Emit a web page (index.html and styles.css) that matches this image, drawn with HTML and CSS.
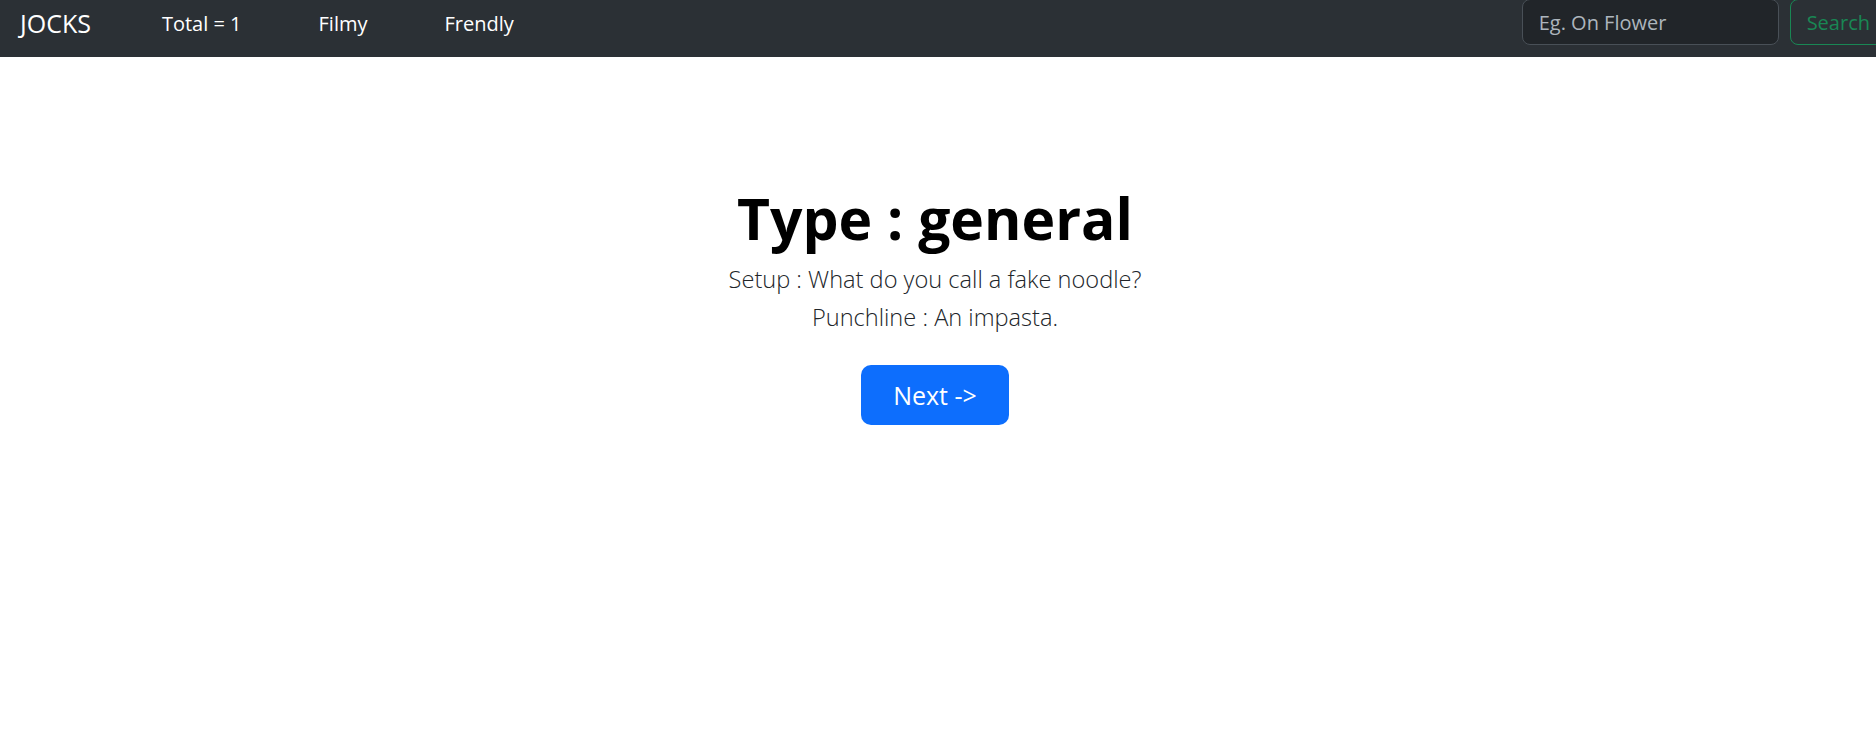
FILE: index.html
```html
<!DOCTYPE html>
<html lang="en">
<head>
<meta charset="utf-8">
<title>JOCKS</title>
<link rel="stylesheet" href="styles.css">
</head>
<body>
<nav class="navbar">
  <a class="brand" href="#">JOCKS</a>
  <ul class="nav-links">
    <li><a href="#">Total = 1</a></li>
    <li><a href="#">Filmy</a></li>
    <li><a href="#">Frendly</a></li>
  </ul>
  <form class="search">
    <input class="search-input" type="search" placeholder="Eg. On Flower">
    <button class="search-btn" type="button">Search</button>
  </form>
</nav>
<main class="joke">
  <h1 class="joke-type">Type : general</h1>
  <p class="joke-line">Setup : What do you call a fake noodle?</p>
  <p class="joke-line">Punchline : An impasta.</p>
  <button class="next-btn" type="button">Next -&gt;</button>
</main>
</body>
</html>
```
FILE: styles.css
```css
* { box-sizing: border-box; }
html, body { margin: 0; padding: 0; overflow: hidden; }
body {
  font-family: "Open Sans", "Noto Sans", sans-serif;
  background: #fff;
  color: #212529;
}
.navbar {
  height: 57px;
  background: #2b3035;
  display: flex;
  align-items: center;
  padding: 0 0 11px 20px;
  white-space: nowrap;
}
.brand {
  color: #fff;
  text-decoration: none;
  font-size: 25px;
  margin-right: 71px;
}
.nav-links {
  display: flex;
  gap: 77px;
  list-style: none;
  margin: 0;
  padding: 0;
  flex: 1;
}
.nav-links a {
  color: #fff;
  text-decoration: none;
  font-size: 20px;
}
.search {
  display: flex;
  margin-top: -2px;
  gap: 11px;
  margin-right: -11px;
}
.search-input {
  width: 257px;
  height: 46px;
  background: #212529;
  border: 1px solid #495057;
  border-radius: 8px;
  padding: 0 16px;
  font-family: inherit;
  font-size: 20px;
  color: #dee2e6;
}
.search-input::placeholder { color: #adb5bd; }
.search-btn {
  height: 46px;
  padding: 0 16px;
  background: transparent;
  border: 1px solid #198754;
  border-radius: 8px;
  color: #198754;
  font-family: inherit;
  font-size: 20px;
}
.joke {
  display: flex;
  flex-direction: column;
  align-items: center;
  text-align: center;
  padding-top: 128px;
  padding-right: 6px;
}
.joke-type {
  margin: 0 0 8px;
  font-size: 57px;
  font-weight: 700;
  line-height: 67px;
  color: #000;
}
.joke-line {
  margin: 0;
  font-size: 23.6px;
  font-weight: 300;
  line-height: 38px;
  color: #212529;
}
.next-btn {
  margin-top: 29px;
  width: 148px;
  height: 60px;
  background: #0d6efd;
  border: none;
  border-radius: 10px;
  color: #fff;
  font-family: inherit;
  font-size: 25px;
}
```
